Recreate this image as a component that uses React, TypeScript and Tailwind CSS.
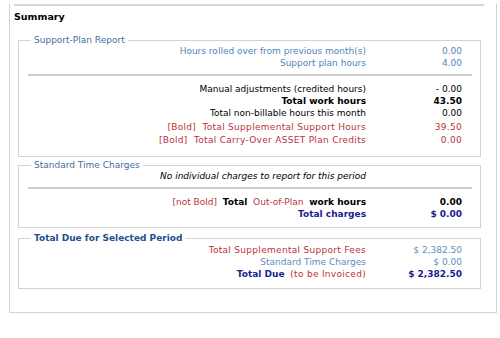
const font = { fontFamily: '"DejaVu Sans", Verdana, sans-serif' }

function Row({
  label,
  value,
  className = '',
  valueClass = '',
}: {
  label: React.ReactNode
  value?: React.ReactNode
  className?: string
  valueClass?: string
}) {
  return (
    <div className={`grid grid-cols-[1fr_96px] pr-[18px] leading-[12px] ${className}`}>
      <div className="text-right">{label}</div>
      <div className={`text-right ${valueClass}`}>{value}</div>
    </div>
  )
}

function Box({
  legend,
  legendClass = '',
  className = '',
  children,
}: {
  legend: string
  legendClass?: string
  className?: string
  children: React.ReactNode
}) {
  return (
    <fieldset className={`ml-[8px] w-[463px] border border-[#d3d3d3] pl-[9px] ${className}`}>
      <legend className={`ml-[3px] px-[3px] leading-[12px] ${legendClass}`}>{legend}</legend>
      {children}
    </fieldset>
  )
}

export default function App() {
  return (
    <div className="h-[338px] w-[500px] overflow-hidden bg-white text-[9px] text-black" style={font}>
      <div className="ml-[9px] h-[309px] w-[488px] border border-t-0 border-[#c9d7e1]">
        <div className="ml-[4px] mt-[4px] h-[2px] w-[470px] bg-[#d6d6d6]" />
        <div className="mt-[5px] ml-[4px] text-[9.5px] font-bold leading-[12px]">Summary</div>

        <Box legend="Support-Plan Report" legendClass="text-[#3f6f9f]" className="mt-[11px] pb-[9px]">
          <div className="text-[#4f86bb]">
            <Row label="Hours rolled over from previous month(s)" value="0.00" className="-mt-px" />
            <Row label="Support plan hours" value="4.00" />
          </div>
          <div className="mr-[8px] mt-[5px] h-[2px] bg-[#cdcdcd]" />
          <Row label="Manual adjustments (credited hours)" value="- 0.00" className="mt-[7px]" />
          <Row label="Total work hours" value="43.50" className="font-bold" />
          <Row label="Total non-billable hours this month" value="0.00" />
          <div className="text-[#b8333a] tracking-[0.3px]">
            <Row label={<>[Bold]&nbsp;&nbsp;Total Supplemental Support Hours</>} value="39.50" className="mt-[2px] leading-[13px]" />
            <Row label={<>[Bold]&nbsp;&nbsp;Total Carry-Over ASSET Plan Credits</>} value="0.00" className="leading-[13px]" />
          </div>
        </Box>

        <Box legend="Standard Time Charges" legendClass="text-[#3f6f9f]" className="mt-[2px] pb-[7px]">
          <Row label={<span className="italic">No individual charges to report for this period</span>} className="-mt-px" />
          <div className="mr-[8px] mt-[5px] h-[2px] bg-[#cdcdcd]" />
          <Row
            className="mt-[7px]"
            label={
              <>
                <span className="text-[#b8333a]">[not Bold]</span>&nbsp;&nbsp;<span className="font-bold">Total</span>&nbsp;&nbsp;
                <span className="text-[#b8333a]">Out-of-Plan</span>&nbsp;&nbsp;<span className="font-bold">work hours</span>
              </>
            }
            value="0.00"
            valueClass="font-bold"
          />
          <Row label="Total charges" value="$ 0.00" className="font-bold text-[#1c1c8f]" />
        </Box>

        <Box
          legend="Total Due for Selected Period"
          legendClass="font-bold text-[#234f8c]"
          className="mt-[4px] pb-[8px]"
        >
          <Row
            label={<span className="text-[#b8333a] tracking-[0.3px]">Total Supplemental Support Fees</span>}
            value="$ 2,382.50"
            valueClass="text-[#5d8fbd]"
          />
          <Row label="Standard Time Charges" value="$ 0.00" className="text-[#5d8fbd]" />
          <Row
            label={
              <>
                <span className="font-bold text-[#1c1c8f]">Total Due</span>&nbsp;&nbsp;
                <span className="text-[#b8333a] tracking-[0.3px]">(to be Invoiced)</span>
              </>
            }
            value="$ 2,382.50"
            valueClass="font-bold text-[#1c1c8f]"
          />
        </Box>
      </div>
    </div>
  )
}
